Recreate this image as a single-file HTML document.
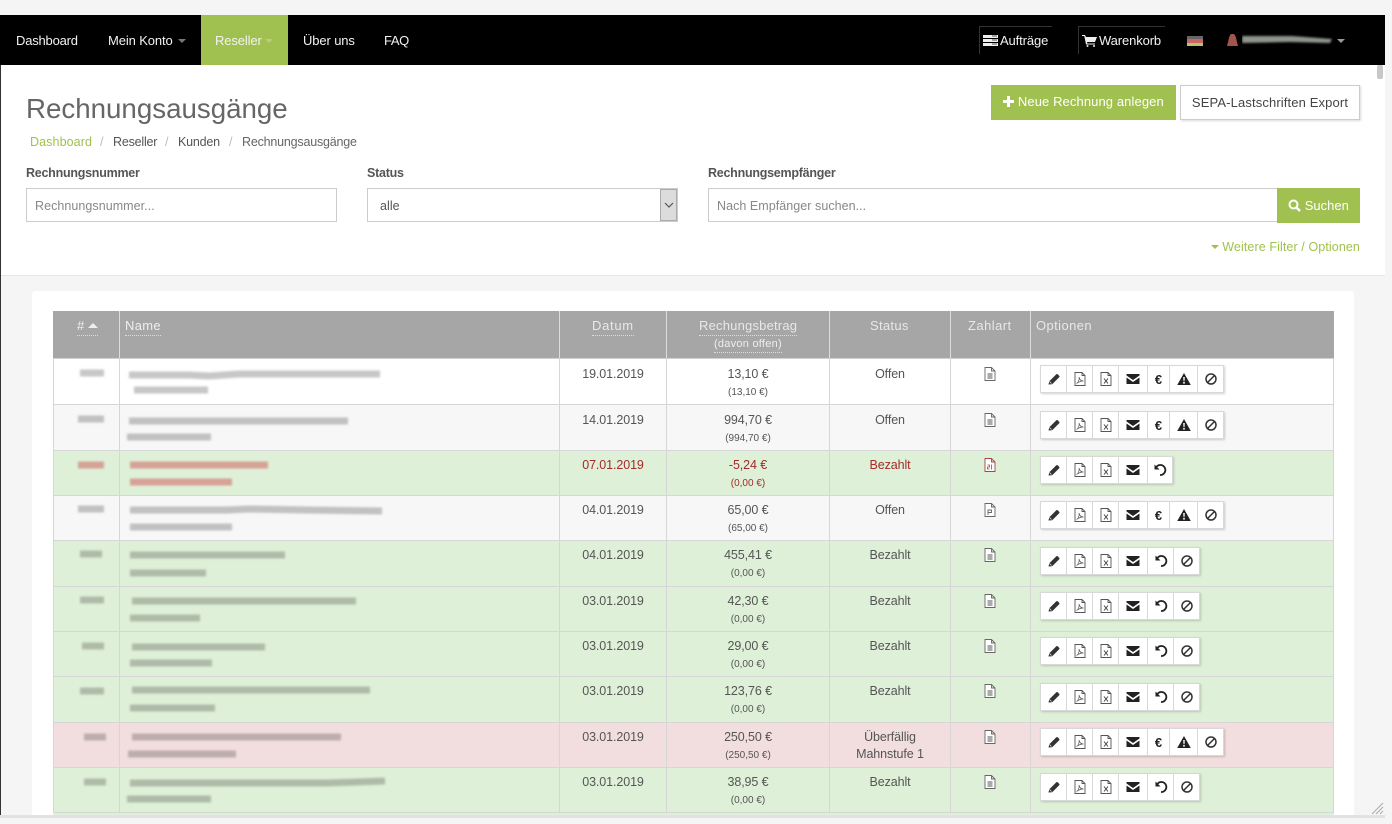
<!DOCTYPE html>
<html lang="de"><head><meta charset="utf-8"><title>Rechnungsausgänge</title>
<style>
html,body{margin:0;padding:0;width:1392px;height:824px;overflow:hidden;background:#f5f5f5;font-family:"Liberation Sans",Arial,sans-serif;font-size:13px;color:#555}
div,span{box-sizing:border-box}
.a{position:absolute;white-space:nowrap}
.nav{position:absolute;left:0;top:15px;width:1385px;height:50px;background:#000}
.n{position:absolute;top:18px;color:#f2f2f2;line-height:16px;letter-spacing:-.12px;white-space:nowrap}
.car{position:absolute;width:0;height:0;border-left:4px solid transparent;border-right:4px solid transparent;border-top:4px solid #777}
.main{position:absolute;left:1px;top:65px;width:1384px;height:750px;background:#fff}
.input{position:absolute;top:188px;height:34px;border:1px solid #ccc;background:#fff;line-height:35px;padding-left:8px;color:#888;font-size:12.5px;letter-spacing:.05px;white-space:nowrap}
.lab{position:absolute;top:165px;font-weight:bold;color:#555;line-height:16px;font-size:12.5px;letter-spacing:-.25px;white-space:nowrap}
.bc{position:absolute;top:134px;line-height:16px;letter-spacing:-.2px;white-space:nowrap;color:#666;font-size:12.5px}
.gbtn{position:absolute;background:#a0c14f;color:#fff;white-space:nowrap;text-align:center;letter-spacing:.1px}
.row{position:absolute;left:53px;width:1281px;border-bottom:1px solid #d6d6d6;box-shadow:inset 1px 0 #d6d6d6,inset -1px 0 #d6d6d6}
.v{position:absolute;top:0;bottom:-1px;width:1px;background:#d6d6d6}
.t{position:absolute;text-align:center;line-height:16px;font-size:12.5px;letter-spacing:-.1px;white-space:nowrap;color:#555;margin-top:1px}
.d{left:507px;width:106px}
.m{left:614px;width:162px}
.s{left:614px;width:162px;font-size:10px;letter-spacing:0;margin-top:2px}
.st{left:777px;width:120px}
.red .t{color:#a52a2a}
.ic{position:absolute;left:931px;width:12px;height:14px}
.bg{position:absolute;left:987px;height:28px;display:flex;background:#fff;border:1px solid #d8d8d8;box-shadow:1px 1px 2px rgba(0,0,0,.18)}
.bg>span{display:flex;align-items:center;justify-content:center;height:26px;border-right:1px solid #d8d8d8;color:#222;font-weight:bold;font-size:13px}
.bg>span:last-child{border-right:0}
.w26{width:26px}.w29{width:29px}.w22{width:22px}.w28{width:28px}.w27{width:25px}
.bg>.w26:last-child{width:24px}
.u{border-bottom:1px dotted #ddd;padding-bottom:1px}
</style></head>
<body>
<svg width="0" height="0" style="position:absolute">
<defs>
<symbol id="pen" viewBox="0 0 14 14"><path d="M1.500 12.500l.8-3.200 7-7a1 1 0 0 1 1.400 0l1.500 1.500a1 1 0 0 1 0 1.400l-7 7z" fill="#333"/><path d="M2.500 9.500l2 2" stroke="#fff" stroke-width=".6"/></symbol>
<symbol id="pdf" viewBox="0 0 14 14"><path d="M2 .5h7l3 3v10H2z M9 .5v3h3" fill="#fff" stroke="#555" stroke-width=".9"/><path d="M3.500 11.500c2-1 3-4 2.500-6.500.5 2.500 2 4 4.500 4-2 0-5 1-7 2.500z" fill="none" stroke="#555" stroke-width=".7"/></symbol>
<symbol id="xls" viewBox="0 0 14 14"><path d="M2 .5h7l3 3v10H2z M9 .5v3h3" fill="#fff" stroke="#555" stroke-width=".9"/><path d="M5 6.500l4 5M9 6.500l-4 5" stroke="#444" stroke-width="1"/></symbol>
<symbol id="env" viewBox="0 0 14 14"><path d="M.5 2h13v1.500L7 8 .5 3.500z M.5 5.500L7 10l6.500-4.500V12h-13z" fill="#222"/></symbol>
<symbol id="warn" viewBox="0 0 14 14"><path d="M7 1l6.800 12H.2z" fill="#222"/><path d="M6.200 5h1.600l-.3 4.200h-1z M6.200 10h1.600v1.600H6.200z" fill="#fff"/></symbol>
<symbol id="ban" viewBox="0 0 14 14"><circle cx="7" cy="7" r="5" fill="none" stroke="#333" stroke-width="1.500"/><path d="M3.500 10.500l7-7" stroke="#333" stroke-width="1.500"/></symbol>
<symbol id="undo" viewBox="0 0 14 14"><path d="M3.200 4.200A5 5 0 1 1 7 12" fill="none" stroke="#222" stroke-width="1.800"/><path d="M1.500 1.500v5h5z" fill="#222"/></symbol>
<symbol id="doc" viewBox="0 0 12 14"><path d="M1 .5h6.500l3.500 3.500v9.500H1z M7.500 .5V4H11" fill="#fff" stroke="#666" stroke-width=".9"/><path d="M3.500 7h5M3.500 9h5M3.500 11h5" stroke="#555" stroke-width=".9"/></symbol>
<symbol id="docr" viewBox="0 0 12 14"><path d="M1 .5h6.500l3.500 3.500v9.500H1z M7.500 .5V4H11" fill="#fff" stroke="#a94442" stroke-width=".9"/><path d="M3.500 7h2v2h-2v2h2M7.500 6.500v5" fill="none" stroke="#a94442" stroke-width=".8"/></symbol>
<symbol id="docp" viewBox="0 0 12 14"><path d="M1 .5h6.500l3.500 3.500v9.500H1z M7.500 .5V4H11" fill="#fff" stroke="#666" stroke-width=".9"/><path d="M4 12V7h3.500v2.500H4" fill="none" stroke="#666" stroke-width=".9"/></symbol>
<filter id="bl" x="-10%" y="-200%" width="120%" height="500%"><feGaussianBlur stdDeviation="1.100"/></filter>
</defs>
</svg>

<div class="main"></div>
<div class="a" style="left:0;top:65px;width:1px;height:750px;background:#333"></div>
<div class="a" style="left:1px;top:275px;width:1384px;height:540px;background:#f5f5f5;border-top:1px solid #e6e6e6"></div>
<div class="a" style="left:32px;top:291px;width:1322px;height:524px;background:#fff;border-radius:3px 3px 0 0"></div>
<div class="a" style="left:0;top:815px;width:1385px;height:3px;background:#e2e2e2"></div>
<div class="a" style="left:1377px;top:65px;width:6px;height:14px;background:#c8c8c8;border-radius:2px"></div>

<div class="nav">
<span class="n" style="left:16px;letter-spacing:-.2px">Dashboard</span>
<span class="n" style="left:108px">Mein Konto</span><span class="car" style="left:178px;top:24px"></span>
<div class="a" style="left:201px;top:0;width:87px;height:50px;background:#a0c14f"></div>
<span class="n" style="left:215px">Reseller</span><span class="car" style="left:265px;top:24px;border-top-color:#b6cf7d"></span>
<span class="n" style="left:303px">Über uns</span>
<span class="n" style="left:384px;letter-spacing:-.4px">FAQ</span>
<div class="a" style="left:979px;top:11px;width:73px;height:28px;border-left:1px solid #333;border-top:1px solid #333"></div>
<svg class="a" style="left:983px;top:20px" width="15" height="11"><path d="M0 0h15v3H0zM0 4h15v3H0zM0 8h15v3H0z" fill="#eee"/><path d="M9 1h5M9 5h5M9 9h5" stroke="#555"/></svg>
<span class="n" style="left:1000px">Aufträge</span>
<div class="a" style="left:1078px;top:11px;width:87px;height:28px;border-left:1px solid #333;border-top:1px solid #333"></div>
<svg class="a" style="left:1082px;top:20px" width="15" height="12"><path d="M0 0h3l1 2h11l-2 5H5l.4 1.500H13v1H4L2.300 1H0z" fill="#eee"/><circle cx="5.500" cy="11" r="1" fill="#eee"/><circle cx="12" cy="11" r="1" fill="#eee"/></svg>
<span class="n" style="left:1099px">Warenkorb</span>
<svg class="a" style="left:1187px;top:21px" width="16" height="10"><rect width="16" height="3" fill="#666"/><rect y="3" width="16" height="4" fill="#c66"/><rect y="7" width="16" height="3" fill="#b9c46a"/></svg>
<svg class="a" style="left:1227px;top:19px" width="12" height="13"><path d="M4 0h3q2 2 2.500 6l1.500 6H0l1.500-6Q2 2 4 0z" fill="#a2554a"/></svg>
<svg class="a" style="left:1242px;top:18px" width="92" height="14"><path d="M0 3h50l40 3-2 4-40-1-48 1z" fill="#8f958c" filter="url(#bl)"/></svg>
<span class="car" style="left:1337px;top:24px;border-top-color:#999"></span>
</div>

<div class="a" style="left:26px;top:91px;font-size:27.7px;line-height:36px;color:#666">Rechnungsausgänge</div>
<span class="bc" style="left:30px;color:#a0c14f;letter-spacing:.1px">Dashboard</span>
<span class="bc" style="left:100px;color:#bbb">/</span>
<span class="bc" style="left:113px;color:#555">Reseller</span>
<span class="bc" style="left:165px;color:#bbb">/</span>
<span class="bc" style="left:178px;color:#555">Kunden</span>
<span class="bc" style="left:229px;color:#bbb">/</span>
<span class="bc" style="left:242px;color:#666">Rechnungsausgänge</span>

<div class="gbtn" style="left:991px;top:85px;width:185px;height:35px;line-height:34px"><svg width="11" height="11" style="vertical-align:-1px"><path d="M4 0h3v4h4v3H7v4H4V7H0V4h4z" fill="#fff"/></svg> Neue Rechnung anlegen</div>
<div class="a" style="left:1180px;top:85px;width:180px;height:35px;line-height:33px;background:#fff;border:1px solid #ccc;box-shadow:1px 1px 2px rgba(0,0,0,.15);color:#444;text-align:center;letter-spacing:.13px">SEPA-Lastschriften Export</div>

<span class="lab" style="left:26px">Rechnungsnummer</span>
<span class="lab" style="left:367px">Status</span>
<span class="lab" style="left:708px">Rechnungsempfänger</span>
<div class="input" style="left:26px;width:311px">Rechnungsnummer...</div>
<div class="input" style="left:367px;width:311px;color:#555;padding-left:12px">alle</div>
<div class="a" style="left:660px;top:189px;width:17px;height:32px;background:#dcdcdc;border:1px solid #aaa"></div>
<svg class="a" style="left:664px;top:202px" width="10" height="6"><path d="M1 1l4 4 4-4" fill="none" stroke="#555" stroke-width="1.200"/></svg>
<div class="input" style="left:708px;width:570px">Nach Empfänger suchen...</div>
<div class="gbtn" style="left:1277px;top:188px;width:83px;height:35px;line-height:35px;letter-spacing:0"><svg width="13" height="13" style="vertical-align:-2px"><circle cx="5.500" cy="5.500" r="4" fill="none" stroke="#fff" stroke-width="2"/><path d="M8.500 8.500l3.500 3.500" stroke="#fff" stroke-width="2.400"/></svg> Suchen</div>
<div class="a" style="right:32px;top:239px;color:#a0c14f;line-height:16px;font-size:12.5px;letter-spacing:.1px"><span style="display:inline-block;width:0;height:0;border-left:4px solid transparent;border-right:4px solid transparent;border-top:4px solid #a0c14f;vertical-align:2px"></span> Weitere Filter / Optionen</div>

<!-- table header -->
<div class="a" style="left:53px;top:311px;width:1281px;height:47px;background:#a6a6a6"></div>
<div class="a" style="left:53px;top:358px;width:1281px;height:2px;background:#d2d2d2"></div>
<div class="a" style="left:119px;top:311px;width:1px;height:47px;background:#ddd"></div>
<div class="a" style="left:559px;top:311px;width:1px;height:47px;background:#ddd"></div>
<div class="a" style="left:666px;top:311px;width:1px;height:47px;background:#ddd"></div>
<div class="a" style="left:829px;top:311px;width:1px;height:47px;background:#ddd"></div>
<div class="a" style="left:950px;top:311px;width:1px;height:47px;background:#ddd"></div>
<div class="a" style="left:1030px;top:311px;width:1px;height:47px;background:#ddd"></div>
<span class="a u" style="left:77px;top:318px;color:#eee;line-height:16px;letter-spacing:.2px"># <span style="display:inline-block;width:0;height:0;border-left:5px solid transparent;border-right:5px solid transparent;border-bottom:5px solid #eee;vertical-align:2px"></span></span>
<span class="a u" style="left:125px;top:318px;color:#eee;line-height:16px;letter-spacing:.3px">Name</span>
<span class="a u" style="left:592px;top:318px;color:#e8e8e8;line-height:16px;letter-spacing:.7px">Datum</span>
<span class="a u" style="left:699px;top:318px;color:#e8e8e8;line-height:16px;letter-spacing:.2px">Rechungsbetrag</span>
<span class="a u" style="left:714px;top:338px;color:#eee;line-height:13px;font-size:11px;letter-spacing:.25px">(davon offen)</span>
<span class="a" style="left:870px;top:318px;color:#e8e8e8;line-height:16px;letter-spacing:.3px">Status</span>
<span class="a" style="left:968px;top:318px;color:#e8e8e8;line-height:16px;letter-spacing:.45px">Zahlart</span>
<span class="a" style="left:1036px;top:318px;color:#e8e8e8;line-height:16px;letter-spacing:.4px">Optionen</span>

<!-- rows -->
<div class="row" style="top:359px;height:46px;background:#fff"><i class="v" style="left:66px"></i><i class="v" style="left:506px"></i><i class="v" style="left:613px"></i><i class="v" style="left:776px"></i><i class="v" style="left:897px"></i><i class="v" style="left:977px"></i>
<span class="t d" style="top:6px">19.01.2019</span><span class="t m" style="top:6px">13,10 €</span><span class="t s" style="top:24px">(13,10 €)</span><span class="t st" style="top:6px">Offen</span><svg class="ic" style="top:8px"><use href="#doc"/></svg>
<div class="bg" style="top:6px"><span class="w26"><svg width="14" height="14"><use href="#pen"/></svg></span><span class="w26"><svg width="14" height="14"><use href="#pdf"/></svg></span><span class="w26"><svg width="14" height="14"><use href="#xls"/></svg></span><span class="w29"><svg width="14" height="14"><use href="#env"/></svg></span><span class="w22">€</span><span class="w28"><svg width="14" height="14"><use href="#warn"/></svg></span><span class="w27"><svg width="14" height="14"><use href="#ban"/></svg></span></div></div>

<div class="row" style="top:405px;height:46px;background:#f7f7f7"><i class="v" style="left:66px"></i><i class="v" style="left:506px"></i><i class="v" style="left:613px"></i><i class="v" style="left:776px"></i><i class="v" style="left:897px"></i><i class="v" style="left:977px"></i>
<span class="t d" style="top:6px">14.01.2019</span><span class="t m" style="top:6px">994,70 €</span><span class="t s" style="top:24px">(994,70 €)</span><span class="t st" style="top:6px">Offen</span><svg class="ic" style="top:8px"><use href="#doc"/></svg>
<div class="bg" style="top:6px"><span class="w26"><svg width="14" height="14"><use href="#pen"/></svg></span><span class="w26"><svg width="14" height="14"><use href="#pdf"/></svg></span><span class="w26"><svg width="14" height="14"><use href="#xls"/></svg></span><span class="w29"><svg width="14" height="14"><use href="#env"/></svg></span><span class="w22">€</span><span class="w28"><svg width="14" height="14"><use href="#warn"/></svg></span><span class="w27"><svg width="14" height="14"><use href="#ban"/></svg></span></div></div>

<div class="row red" style="top:451px;height:45px;background:#dff0d8"><i class="v" style="left:66px"></i><i class="v" style="left:506px"></i><i class="v" style="left:613px"></i><i class="v" style="left:776px"></i><i class="v" style="left:897px"></i><i class="v" style="left:977px"></i>
<span class="t d" style="top:5px">07.01.2019</span><span class="t m" style="top:5px">-5,24 €</span><span class="t s" style="top:23px">(0,00 €)</span><span class="t st" style="top:5px">Bezahlt</span><svg class="ic" style="top:7px"><use href="#docr"/></svg>
<div class="bg" style="top:5px"><span class="w26"><svg width="14" height="14"><use href="#pen"/></svg></span><span class="w26"><svg width="14" height="14"><use href="#pdf"/></svg></span><span class="w26"><svg width="14" height="14"><use href="#xls"/></svg></span><span class="w29"><svg width="14" height="14"><use href="#env"/></svg></span><span class="w26"><svg width="14" height="14"><use href="#undo"/></svg></span></div></div>

<div class="row" style="top:496px;height:45px;background:#f7f7f7"><i class="v" style="left:66px"></i><i class="v" style="left:506px"></i><i class="v" style="left:613px"></i><i class="v" style="left:776px"></i><i class="v" style="left:897px"></i><i class="v" style="left:977px"></i>
<span class="t d" style="top:5px">04.01.2019</span><span class="t m" style="top:5px">65,00 €</span><span class="t s" style="top:23px">(65,00 €)</span><span class="t st" style="top:5px">Offen</span><svg class="ic" style="top:7px"><use href="#docp"/></svg>
<div class="bg" style="top:5px"><span class="w26"><svg width="14" height="14"><use href="#pen"/></svg></span><span class="w26"><svg width="14" height="14"><use href="#pdf"/></svg></span><span class="w26"><svg width="14" height="14"><use href="#xls"/></svg></span><span class="w29"><svg width="14" height="14"><use href="#env"/></svg></span><span class="w22">€</span><span class="w28"><svg width="14" height="14"><use href="#warn"/></svg></span><span class="w27"><svg width="14" height="14"><use href="#ban"/></svg></span></div></div>

<div class="row" style="top:541px;height:46px;background:#dff0d8"><i class="v" style="left:66px"></i><i class="v" style="left:506px"></i><i class="v" style="left:613px"></i><i class="v" style="left:776px"></i><i class="v" style="left:897px"></i><i class="v" style="left:977px"></i>
<span class="t d" style="top:5px">04.01.2019</span><span class="t m" style="top:5px">455,41 €</span><span class="t s" style="top:23px">(0,00 €)</span><span class="t st" style="top:5px">Bezahlt</span><svg class="ic" style="top:7px"><use href="#doc"/></svg>
<div class="bg" style="top:6px"><span class="w26"><svg width="14" height="14"><use href="#pen"/></svg></span><span class="w26"><svg width="14" height="14"><use href="#pdf"/></svg></span><span class="w26"><svg width="14" height="14"><use href="#xls"/></svg></span><span class="w29"><svg width="14" height="14"><use href="#env"/></svg></span><span class="w26"><svg width="14" height="14"><use href="#undo"/></svg></span><span class="w27"><svg width="14" height="14"><use href="#ban"/></svg></span></div></div>

<div class="row" style="top:587px;height:45px;background:#dff0d8"><i class="v" style="left:66px"></i><i class="v" style="left:506px"></i><i class="v" style="left:613px"></i><i class="v" style="left:776px"></i><i class="v" style="left:897px"></i><i class="v" style="left:977px"></i>
<span class="t d" style="top:5px">03.01.2019</span><span class="t m" style="top:5px">42,30 €</span><span class="t s" style="top:23px">(0,00 €)</span><span class="t st" style="top:5px">Bezahlt</span><svg class="ic" style="top:7px"><use href="#doc"/></svg>
<div class="bg" style="top:5px"><span class="w26"><svg width="14" height="14"><use href="#pen"/></svg></span><span class="w26"><svg width="14" height="14"><use href="#pdf"/></svg></span><span class="w26"><svg width="14" height="14"><use href="#xls"/></svg></span><span class="w29"><svg width="14" height="14"><use href="#env"/></svg></span><span class="w26"><svg width="14" height="14"><use href="#undo"/></svg></span><span class="w27"><svg width="14" height="14"><use href="#ban"/></svg></span></div></div>

<div class="row" style="top:632px;height:45px;background:#dff0d8"><i class="v" style="left:66px"></i><i class="v" style="left:506px"></i><i class="v" style="left:613px"></i><i class="v" style="left:776px"></i><i class="v" style="left:897px"></i><i class="v" style="left:977px"></i>
<span class="t d" style="top:5px">03.01.2019</span><span class="t m" style="top:5px">29,00 €</span><span class="t s" style="top:23px">(0,00 €)</span><span class="t st" style="top:5px">Bezahlt</span><svg class="ic" style="top:7px"><use href="#doc"/></svg>
<div class="bg" style="top:5px"><span class="w26"><svg width="14" height="14"><use href="#pen"/></svg></span><span class="w26"><svg width="14" height="14"><use href="#pdf"/></svg></span><span class="w26"><svg width="14" height="14"><use href="#xls"/></svg></span><span class="w29"><svg width="14" height="14"><use href="#env"/></svg></span><span class="w26"><svg width="14" height="14"><use href="#undo"/></svg></span><span class="w27"><svg width="14" height="14"><use href="#ban"/></svg></span></div></div>

<div class="row" style="top:677px;height:46px;background:#dff0d8"><i class="v" style="left:66px"></i><i class="v" style="left:506px"></i><i class="v" style="left:613px"></i><i class="v" style="left:776px"></i><i class="v" style="left:897px"></i><i class="v" style="left:977px"></i>
<span class="t d" style="top:5px">03.01.2019</span><span class="t m" style="top:5px">123,76 €</span><span class="t s" style="top:23px">(0,00 €)</span><span class="t st" style="top:5px">Bezahlt</span><svg class="ic" style="top:7px"><use href="#doc"/></svg>
<div class="bg" style="top:6px"><span class="w26"><svg width="14" height="14"><use href="#pen"/></svg></span><span class="w26"><svg width="14" height="14"><use href="#pdf"/></svg></span><span class="w26"><svg width="14" height="14"><use href="#xls"/></svg></span><span class="w29"><svg width="14" height="14"><use href="#env"/></svg></span><span class="w26"><svg width="14" height="14"><use href="#undo"/></svg></span><span class="w27"><svg width="14" height="14"><use href="#ban"/></svg></span></div></div>

<div class="row" style="top:723px;height:45px;background:#f2dede"><i class="v" style="left:66px"></i><i class="v" style="left:506px"></i><i class="v" style="left:613px"></i><i class="v" style="left:776px"></i><i class="v" style="left:897px"></i><i class="v" style="left:977px"></i>
<span class="t d" style="top:5px">03.01.2019</span><span class="t m" style="top:5px">250,50 €</span><span class="t s" style="top:23px">(250,50 €)</span><span class="t st" style="top:5px">Überfällig</span><span class="t st" style="top:22px">Mahnstufe 1</span><svg class="ic" style="top:7px"><use href="#doc"/></svg>
<div class="bg" style="top:5px"><span class="w26"><svg width="14" height="14"><use href="#pen"/></svg></span><span class="w26"><svg width="14" height="14"><use href="#pdf"/></svg></span><span class="w26"><svg width="14" height="14"><use href="#xls"/></svg></span><span class="w29"><svg width="14" height="14"><use href="#env"/></svg></span><span class="w22">€</span><span class="w28"><svg width="14" height="14"><use href="#warn"/></svg></span><span class="w27"><svg width="14" height="14"><use href="#ban"/></svg></span></div></div>

<div class="row" style="top:768px;height:45px;background:#dff0d8"><i class="v" style="left:66px"></i><i class="v" style="left:506px"></i><i class="v" style="left:613px"></i><i class="v" style="left:776px"></i><i class="v" style="left:897px"></i><i class="v" style="left:977px"></i>
<span class="t d" style="top:5px">03.01.2019</span><span class="t m" style="top:5px">38,95 €</span><span class="t s" style="top:23px">(0,00 €)</span><span class="t st" style="top:5px">Bezahlt</span><svg class="ic" style="top:7px"><use href="#doc"/></svg>
<div class="bg" style="top:5px"><span class="w26"><svg width="14" height="14"><use href="#pen"/></svg></span><span class="w26"><svg width="14" height="14"><use href="#pdf"/></svg></span><span class="w26"><svg width="14" height="14"><use href="#xls"/></svg></span><span class="w29"><svg width="14" height="14"><use href="#env"/></svg></span><span class="w26"><svg width="14" height="14"><use href="#undo"/></svg></span><span class="w27"><svg width="14" height="14"><use href="#ban"/></svg></span></div></div>

<div class="a" style="left:53px;top:813px;width:1281px;height:2px;background:#dff0d8"></div>

<!-- blurred-out names -->
<svg class="a" style="left:0;top:0" width="1392" height="824">
<g fill="none" stroke="#000" stroke-opacity=".22" stroke-width="7" filter="url(#bl)">
<path d="M80 373h24M129 375h60l20 1 30-2h141"/><path d="M134 390h74"/>
<path d="M78 419h26M129 421h219"/><path d="M127 437h84"/>
<path d="M78 509h26M130 510h98l20-1 60 1 74 1"/><path d="M130 527h102"/>
<path d="M80 554h22M130 555h155"/><path d="M130 573h76"/>
<path d="M80 600h24M132 601h224"/><path d="M130 618h70"/>
<path d="M82 646h22M132 647h133"/><path d="M130 663h82"/>
<path d="M80 691h24M132 690h238"/><path d="M130 708h85"/>
<path d="M84 737h22M132 737h209"/><path d="M128 754h108"/>
<path d="M84 782h22M130 783h198l57-2"/><path d="M127 799h84"/>
</g>
<g fill="none" stroke="#d6a296" stroke-width="7" filter="url(#bl)"><path d="M78 465h26M130 465h138"/><path d="M130 482h102"/></g>
<path d="M1372 814l11-11M1376 814l7-7M1380 814l3-3" stroke="#aaa" fill="none"/>
</svg>
</body></html>
